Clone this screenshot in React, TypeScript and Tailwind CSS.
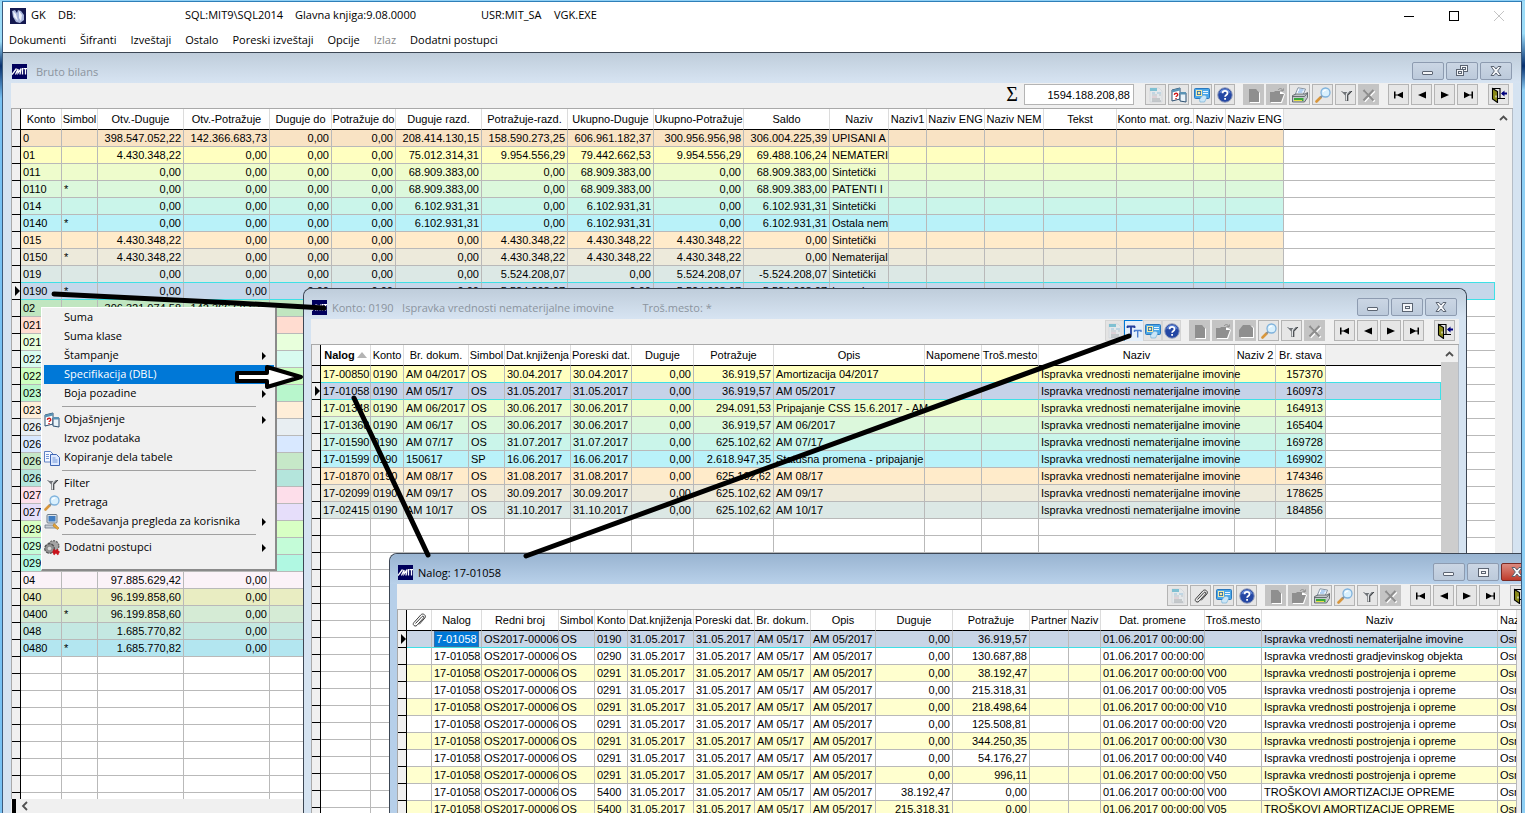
import type { ReactNode } from "react";
import clsx from "clsx";

type Col = { w?: number; label: ReactNode; align?: "right"; bold?: boolean; headLeft?: boolean; spill?: boolean };
type Row = { bg: string; cells: ReactNode[] };

/* ---------- icons ---------- */

const icons: Record<string, ReactNode> = {
  form: (
    <>
      <path d="M2 1h9l3 3v11H2z" fill="#e4e8ea" stroke="#ccd2d6" strokeWidth="0.6" />
      <path d="M2 1h7v3H2z" fill="#7fc0d2" />
      <path d="M4 6h3M9 6h4" stroke="#9cc3dc" />
      <path d="M4 8h5M11 8h2" stroke="#b9c2c8" />
      <path d="M4 10h5" stroke="#d9bac2" />
      <path d="M4 12h8M4 14h9" stroke="#a4a8ab" />
    </>
  ),
  explain: (
    <>
      <path d="M1 3l8-2v11l-8 2z" fill="#fff" stroke="#2c4f70" />
      <path d="M1 3l8-2v2.500L1 5.500z" fill="#5b93b5" />
      <path d="M9 6h6v9l-6-1z" fill="#eaf4fa" stroke="#2c4f70" />
      <path d="M9 5h6v2.500H9z" fill="#5b93b5" />
      <path d="M3.300 7.800c.3-2 3.700-2 3.400 0-.2 1.300-1.600 1.200-1.600 2.300M5 11v1.300" stroke="#d01818" strokeWidth="1.400" fill="none" />
    </>
  ),
  screen: (
    <>
      <rect x="0.500" y="1.500" width="15" height="10" rx="1" fill="#4ba7e8" stroke="#2b78bd" />
      <rect x="2.500" y="3.500" width="5" height="5" fill="#2f6fa8" stroke="#f3e9a6" />
      <circle cx="5" cy="6" r="1.300" fill="#f3e9a6" />
      <path d="M9 4.500h5M9 6.500h5" stroke="#e8f5ff" />
      <path d="M8 9c2-1.500 5-.5 4.500 2L10.500 15H6l-.5-2.500z" fill="#cbe6f7" stroke="#6aa9d2" strokeWidth="0.600" />
    </>
  ),
  help: (
    <>
      <circle cx="8" cy="8" r="7.300" fill="#2447a4" stroke="#9aa3bd" />
      <path d="M2.200 6.500a6 6 0 0 1 11.600 0c-3-2-8.600-2-11.600 0z" fill="#6488d6" />
      <path d="M5.600 6.200c0-3 4.900-3 4.900 0 0 1.800-2.400 1.700-2.400 3.600M8.100 11v1.800" stroke="#fff" strokeWidth="1.800" fill="none" />
    </>
  ),
  blank: (
    <>
      <path d="M4 3h7l3 3v10H4z" fill="#fff" />
      <path d="M3 2h7l3 3v10H3z" fill="#8f8f8f" />
    </>
  ),
  folder: (
    <>
      <path d="M2 6h4l1-1h6l3 2-3 9H2z" fill="#fff" />
      <path d="M1 5h4l1-1h5v3h4l-3 8H1z" fill="#8f8f8f" />
      <path d="M9 3c1.500-2 4-2 5 1M14 4l.5-2.500M14 4l-2.500-.5" stroke="#8f8f8f" fill="none" />
    </>
  ),
  cabinet: (
    <>
      <path d="M2 8l4-5h8l2 2v10H3z" fill="#fff" />
      <path d="M1 7l4-5h7l3 3v9H1z" fill="#8f8f8f" />
    </>
  ),
  printer: (
    <>
      <path d="M6 .800l7.500 1.200-2.500 6H3z" fill="#f6faff" stroke="#6f7f90" strokeWidth="0.800" />
      <path d="M7 3h4.500M6 5h4.500" stroke="#6fa5e3" />
      <path d="M.500 8.500L4 7h9l2.500-1.500v5L12.500 15H.500z" fill="#c3c8cc" stroke="#4f565c" strokeWidth="0.800" />
      <path d="M.500 9.500h12L15.500 6" fill="none" stroke="#4f565c" strokeWidth="0.800" />
      <path d="M2 11h9.500v3H2z" fill="#3aa83c" />
      <path d="M2 13.500h8" stroke="#e6e04a" />
    </>
  ),
  search: (
    <>
      <path d="M5.500 10.500L1.500 14.500" stroke="#d8963c" strokeWidth="2.600" strokeLinecap="round" />
      <path d="M7.500 8.500l-2 2" stroke="#8a8f95" strokeWidth="2" />
      <circle cx="10.500" cy="5.500" r="4.500" fill="#d9f0fd" stroke="#7fb2dc" strokeWidth="1.300" />
      <path d="M8.200 5c.5-1.500 2-2 3-1.800" stroke="#fff" strokeWidth="1.200" fill="none" />
    </>
  ),
  funnel: (
    <>
      <path d="M3 4h11l-4 4.500V14H7.200V8.500z" fill="#6f7377" />
      <path d="M4.500 4.500h6L8.500 7v6.500" stroke="#e4e6e8" fill="none" strokeWidth="1.200" />
      <path d="M14 4l-4.200 4.500V14" stroke="#3e4144" fill="none" />
    </>
  ),
  cross: (
    <>
      <path d="M3.500 4l10 10.500M13.500 4l-10 10.500" stroke="#fff" strokeWidth="2.200" />
      <path d="M2.500 3l10 10.500M12.500 3l-10 10.500" stroke="#8e8e8e" strokeWidth="2.200" />
    </>
  ),
  first: <path d="M3 4.500h1.500V7.500h2L12 4.800v6.400L6.500 8.500h-2v3H3z" fill="#000" />,
  prev: <path d="M12 4.500v7L4 8z" fill="#000" />,
  next: <path d="M4 4.500v7L12 8z" fill="#000" />,
  last: <path d="M13 4.500h-1.500V7.500h-2L4 4.800v6.400L9.500 8.500h2v3H13z" fill="#000" />,
  exit: (
    <>
      <path d="M1.500 1.500H9M9 1v10.500M7 11.500h7" fill="none" stroke="#000" strokeWidth="1.100" />
      <path d="M1.500 1.500l5 3v11l-5-3.500z" fill="#8a8a18" stroke="#000" strokeWidth="1.100" />
      <path d="M5 8.500v2" stroke="#fff" />
      <path d="M11 6.500h5" stroke="#00007c" strokeWidth="2" />
      <path d="M13.500 3.500v6l-3.500-3z" fill="#00007c" />
    </>
  ),
  clip: (
    <path
      d="M4.500 11.500l6.500-7c1-1 2.500.2 1.600 1.400L6 13.300c-1.800 2-5-.4-3.200-2.600L9.800 2.900c2.200-2.400 6 .6 4 3.200l-5.600 6.300"
      fill="none"
      stroke="#3c3c3c"
      strokeWidth="1"
    />
  ),
  letters: (
    <>
      <path d="M1 3.500h8M5 3.500v9M1.500 3v2M8.500 3v2" stroke="#233f9c" strokeWidth="1.800" />
      <path d="M8 7.500h7.500M11.700 7.500v7M8.500 7v2M15 7v2" stroke="#4d7fd0" strokeWidth="1.400" />
    </>
  ),
  copy: (
    <>
      <path d="M.5 1.500h6l2.500 2.500v8h-8.500z" fill="#f4f8ff" stroke="#5c80c4" />
      <path d="M6.500 4.500h6l3 3v8h-9z" fill="#dde9ff" stroke="#3f66b4" />
      <path d="M2 4.500h3M2 6.500h3M2 8.500h3M8.500 8h3M8.500 10h5M8.500 12h5" stroke="#7397d8" />
    </>
  ),
  computer: (
    <>
      <rect x="3" y="0.500" width="10" height="8.500" rx="1" fill="#dce3ea" stroke="#6c7a88" />
      <rect x="4.500" y="2" width="7" height="5.500" fill="#3f7cc0" />
      <path d="M1 11h11v3H1z" fill="#c6ccd2" stroke="#6c7a88" strokeWidth="0.800" />
      <path d="M10 9.500l5 4.500-1.500 1.500L9 12z" fill="#e6a63a" stroke="#b77818" strokeWidth="0.600" />
    </>
  ),
  gears: (
    <>
      <circle cx="9.500" cy="6" r="5.300" fill="#a4a4a4" stroke="#6b6b6b" strokeWidth="1.400" strokeDasharray="2 1" />
      <circle cx="5.500" cy="8.500" r="4.800" fill="#8f8f8f" stroke="#4e4e4e" strokeWidth="1.200" strokeDasharray="3 1" />
      <circle cx="5.500" cy="8.500" r="1.800" fill="#d8d8d8" />
      <path d="M9.500 9.500l5 5M14 9.500l-4.500 5M8.500 12h7" stroke="#c8141c" strokeWidth="1.900" />
    </>
  ),
};

const Icon = ({ name }: { name: string }) => (
  <svg viewBox="0 0 16 16" className="size-4 shrink-0" aria-hidden="true">
    {icons[name]}
  </svg>
);

const MitLogo = () => (
  <svg viewBox="0 0 15 15" className="size-[15px] shrink-0" aria-hidden="true">
    <path d="M0 0h15v15H0z" fill="#00005c" />
    <path d="M0 10.500l4.500-6M3.500 10.500L6 5v4L9 4.500M8 10.500l1-6M10.500 4v6.500M11.500 4.600H15M13.500 4.600v6" stroke="#fff" strokeWidth="1.300" fill="none" />
  </svg>
);

/* ---------- toolbar ---------- */

const DISABLED = ["blank", "folder", "cross", "cabinet"];

const ToolButton = ({ name, flat }: { name: string; flat?: boolean }) => (
  <button
    type="button"
    aria-label={name}
    disabled={DISABLED.includes(name)}
    className={clsx(
      "flex h-[21px] shrink-0 items-center justify-center border",
      flat ? "w-[19px]" : "w-[21px]",
      name === "letters"
        ? "border-transparent border-t-[#0078d7] border-l-[#0078d7] bg-[#e4effa]"
        : DISABLED.includes(name)
          ? "border-[#c4c4c4] bg-[#c4c4c4]"
          : flat
            ? "border-[#d4d4d4] bg-[#e4e4e4]"
            : "border-[#b4b4b4] bg-[#e6e6e6]",
    )}
  >
    <Icon name={name} />
  </button>
);

const Toolbar = ({ left, flat, edit, children }: { left: string[]; flat?: boolean; edit: string[]; children?: ReactNode }) => (
  <div className="flex h-[25px] shrink-0 items-start justify-end bg-[#f0f0f0] pt-px pr-1">
    {children}
    <div className={clsx("mr-2 flex", !flat && "gap-0.5")}>
      {left.map((n) => (
        <ToolButton key={n} name={n} flat={flat} />
      ))}
    </div>
    <div className="mr-[9px] flex gap-0.5">
      {edit.map((n) => (
        <ToolButton key={n} name={n} />
      ))}
    </div>
    <div className="mr-2.5 flex gap-0.5">
      {["first", "prev", "next", "last"].map((n) => (
        <ToolButton key={n} name={n} />
      ))}
    </div>
    <ToolButton name="exit" />
  </div>
);

/* ---------- data grid ---------- */

const Grid = ({ cols, rows, selected, filler, thumb }: { cols: Col[]; rows: Row[]; selected: number; filler?: boolean; thumb?: boolean }) => {
  const blanks: Row[] = Array.from({ length: 44 - rows.length }, () => ({ bg: "#ffffff", cells: [] }));
  return (
    <div className="flex min-h-0 flex-1 overflow-hidden border-t border-l border-[#a9a9a9] bg-white">
      <div className="min-w-0 flex-1 overflow-hidden">
        <table className="w-full table-fixed border-separate border-spacing-0 font-['Liberation_Sans',Arial,sans-serif] text-[11px] leading-4 text-black">
          <colgroup>
            <col className="w-[9px]" />
            {cols.map((c, i) => (
              <col key={i} style={c.w ? { width: c.w } : undefined} />
            ))}
            {filler && <col />}
          </colgroup>
          <thead>
            <tr className="h-[21px]">
              <th className="border-r border-b border-black bg-[#f0f0f0] p-0" />
              {cols.map((c, i) => (
                <th
                  key={i}
                  className={clsx(
                    "border-r border-b border-r-[#dcdcdc] border-b-black p-0 whitespace-nowrap",
                    c.bold ? "font-bold" : "font-normal",
                    c.headLeft ? "pl-0.5 text-left" : "text-center",
                  )}
                >
                  {c.label}
                </th>
              ))}
              {filler && <th className="border-b border-black bg-[#f0f0f0] p-0" />}
            </tr>
          </thead>
          <tbody>
            {[...rows, ...blanks].map((row, r) => {
              const line = r === selected || r === selected - 1 ? "border-b-[#3fe0e6]" : "border-b-[#b9b9b9]";
              return (
                <tr key={r} className="h-[17px]">
                  <td className="border-r border-b border-black bg-[#f0f0f0] p-0">
                    {r === selected && (
                      <svg viewBox="0 0 8 10" className="ml-auto h-2.5 w-[5px]" preserveAspectRatio="none" aria-hidden="true">
                        <path d="M0 0v10l8-5z" />
                      </svg>
                    )}
                  </td>
                  {cols.map((c, i) => (
                    <td
                      key={i}
                      style={{ backgroundColor: row.bg }}
                      className={clsx(
                        "border-r border-b border-r-[#b9b9b9] p-0 px-0.5 whitespace-nowrap",
                        !c.spill && "overflow-hidden",
                        line,
                        c.align === "right" && "text-right",
                      )}
                    >
                      {row.cells[i]}
                    </td>
                  ))}
                  {filler && (
                    <td
                      style={{ backgroundColor: r === selected ? row.bg : "#ffffff" }}
                      className={clsx("border-b p-0", line, r === selected && "border-r border-r-[#3fe0e6]")}
                    />
                  )}
                </tr>
              );
            })}
          </tbody>
        </table>
      </div>
      <div className="flex w-[18px] shrink-0 flex-col items-center border-r border-[#b4bcc6] bg-[#f0f0f0]">
        <svg viewBox="0 0 17 17" className="size-[17px] shrink-0" aria-hidden="true">
          <path d="M5 11l3.500-3.500L12 11" fill="none" stroke="#505050" strokeWidth="1.800" />
        </svg>
        {thumb && <div className="w-full flex-1 bg-[#cdcdcd]" />}
      </div>
    </div>
  );
};

/* ---------- MDI window ---------- */

const CaptionButton = ({ kind, danger }: { kind: "min" | "restore" | "max" | "close"; danger?: boolean }) => (
  <button
    type="button"
    aria-label={kind}
    className={clsx(
      "flex h-[18px] w-8 shrink-0 items-center justify-center rounded-xs border",
      danger ? "border-[#7a2a24] bg-linear-to-b from-[#dc8a80] to-[#bf3a2b]" : "border-[#8d9bb0] bg-linear-to-b from-[#cbd6e4] to-[#bccadb]",
    )}
  >
    <svg viewBox="0 0 14 12" className="h-3 w-3.5" fill="#f4f6f9" stroke="#5b6472" aria-hidden="true">
      {kind === "min" && <rect x="1.500" y="6.500" width="10" height="3" rx="0.500" />}
      {kind === "max" && (
        <>
          <rect x="2.500" y="2.500" width="10" height="8" />
          <rect x="5.500" y="5.500" width="4" height="2" />
        </>
      )}
      {kind === "restore" && (
        <>
          <rect x="5.500" y="0.500" width="7" height="6" />
          <rect x="7.500" y="2.500" width="3" height="2" />
          <rect x="1.500" y="4.500" width="7" height="6" />
          <rect x="3.500" y="6.500" width="3" height="2" />
        </>
      )}
      {kind === "close" && <path d="M2 1.500h3L7 4l2-2.500h3L8.700 6l3.300 4.500H9L7 8l-2 2.500H2L5.300 6z" />}
    </svg>
  </button>
);

const Win = ({
  title,
  active,
  maximized,
  className,
  children,
}: {
  title: ReactNode;
  active?: boolean;
  maximized?: boolean;
  className?: string;
  children: ReactNode;
}) => (
  <section
    className={clsx(
      "flex min-h-0 flex-col border-[#3c4654]",
      maximized ? "border-t" : "rounded-t-lg border border-b-0",
      active ? "bg-[#b6cfe9]" : "bg-[#d5e3f1]",
      className,
    )}
  >
    <header
      className={clsx(
        "flex h-[30px] shrink-0 items-start bg-linear-to-b pr-[9px]",
        maximized ? "gap-[9px] pl-[9px]" : "gap-[5px] rounded-t-lg pl-2",
        active ? "from-[#99b4d1] to-[#b9d1ea]" : "from-[#bfcddb] to-[#d7e4f2]",
      )}
    >
      <div className="flex h-9 items-center">
        <MitLogo />
      </div>
      <h2 className={clsx("flex h-[38px] min-w-0 flex-1 items-center text-[11px] whitespace-pre", active ? "text-black" : "text-[#8b949e]")}>{title}</h2>
      <div className="flex gap-0.5 pt-[9px]">
        <CaptionButton kind="min" />
        <CaptionButton kind={maximized ? "restore" : "max"} />
        <CaptionButton kind="close" danger={active} />
      </div>
    </header>
    <div className={clsx("flex min-h-0 flex-1 flex-col bg-[#f0f0f0]", maximized ? "mx-2" : "mx-[7px]")}>{children}</div>
  </section>
);

/* ---------- data ---------- */

const mainCols: Col[] = [
  { w: 41, label: "Konto" },
  { w: 36, label: "Simbol" },
  { w: 86, label: "Otv.-Duguje", align: "right" },
  { w: 86, label: "Otv.-Potražuje", align: "right" },
  { w: 62, label: "Duguje do", align: "right" },
  { w: 64, label: "Potražuje do", align: "right" },
  { w: 86, label: "Duguje razd.", align: "right" },
  { w: 86, label: "Potražuje-razd.", align: "right" },
  { w: 86, label: "Ukupno-Duguje", align: "right" },
  { w: 90, label: "Ukupno-Potražuje", align: "right" },
  { w: 86, label: "Saldo", align: "right" },
  { w: 59, label: "Naziv" },
  { w: 38, label: "Naziv1" },
  { w: 58, label: "Naziv ENG" },
  { w: 59, label: "Naziv NEM" },
  { w: 73, label: "Tekst" },
  { w: 77, label: "Konto mat. org." },
  { w: 32, label: "Naziv" },
  { w: 58, label: "Naziv ENG" },
];

const Z = "0,00";
const mainRows: Row[] = [
  { bg: "#f9e3c4", cells: ["0", "", "398.547.052,22", "142.366.683,73", Z, Z, "208.414.130,15", "158.590.273,25", "606.961.182,37", "300.956.956,98", "306.004.225,39", "UPISANI A"] },
  { bg: "#ffffc0", cells: ["01", "", "4.430.348,22", Z, Z, Z, "75.012.314,31", "9.954.556,29", "79.442.662,53", "9.954.556,29", "69.488.106,24", "NEMATERI"] },
  { bg: "#eefccc", cells: ["011", "", Z, Z, Z, Z, "68.909.383,00", Z, "68.909.383,00", Z, "68.909.383,00", "Sintetički"] },
  { bg: "#dcf8dc", cells: ["0110", "*", Z, Z, Z, Z, "68.909.383,00", Z, "68.909.383,00", Z, "68.909.383,00", "PATENTI I"] },
  { bg: "#caf5ea", cells: ["014", "", Z, Z, Z, Z, "6.102.931,31", Z, "6.102.931,31", Z, "6.102.931,31", "Sintetički"] },
  { bg: "#b9f2f9", cells: ["0140", "*", Z, Z, Z, Z, "6.102.931,31", Z, "6.102.931,31", Z, "6.102.931,31", "Ostala nema"] },
  { bg: "#ffebca", cells: ["015", "", "4.430.348,22", Z, Z, Z, Z, "4.430.348,22", "4.430.348,22", "4.430.348,22", Z, "Sintetički"] },
  { bg: "#edeadb", cells: ["0150", "*", "4.430.348,22", Z, Z, Z, Z, "4.430.348,22", "4.430.348,22", "4.430.348,22", Z, "Nematerijaln"] },
  { bg: "#dce8e5", cells: ["019", "", Z, Z, Z, Z, Z, "5.524.208,07", Z, "5.524.208,07", "-5.524.208,07", "Sintetički"] },
  { bg: "#c6d7ea", cells: ["0190", "*", Z, Z, Z, Z, Z, "5.524.208,07", Z, "5.524.208,07", "-5.524.208,07", "Ispravka"] },
  { bg: "#c0e6c0", cells: ["02", "", "306.321.074,58", "142.366.683,73"] },
  { bg: "#ffdcd0", cells: ["021"] },
  { bg: "#e8ffdc", cells: ["0210"] },
  { bg: "#d8fbf0", cells: ["022"] },
  { bg: "#ccffc0", cells: ["0220"] },
  { bg: "#b8f6cc", cells: ["023"] },
  { bg: "#ffeed8", cells: ["0230"] },
  { bg: "#e8eef2", cells: ["026"] },
  { bg: "#d8e8ff", cells: ["0260"] },
  { bg: "#c6e8c8", cells: ["0261"] },
  { bg: "#b4e5dc", cells: ["0269"] },
  { bg: "#fddeea", cells: ["027"] },
  { bg: "#e6defa", cells: ["0270"] },
  { bg: "#d8ffc4", cells: ["029"] },
  { bg: "#c4fcd8", cells: ["0290"] },
  { bg: "#b0f8e2", cells: ["0291"] },
  { bg: "#fbf2f8", cells: ["04", "", "97.885.629,42", Z] },
  { bg: "#e9edc2", cells: ["040", "", "96.199.858,60", Z] },
  { bg: "#d5ebd5", cells: ["0400", "*", "96.199.858,60", Z] },
  { bg: "#c4e8e2", cells: ["048", "", "1.685.770,82", Z] },
  { bg: "#b3e6f0", cells: ["0480", "*", "1.685.770,82", Z] },
];

const specCols: Col[] = [
  {
    w: 50,
    bold: true,
    label: (
      <span className="flex items-center justify-center gap-0.5">
        Nalog
        <svg viewBox="0 0 10 6" className="h-1.5 w-2.5" aria-hidden="true">
          <path d="M0 6h10L5 0z" fill="#b4b4b4" />
        </svg>
      </span>
    ),
  },
  { w: 33, label: "Konto" },
  { w: 65, label: "Br. dokum." },
  { w: 36, label: "Simbol" },
  { w: 66, label: "Dat.knjiženja" },
  { w: 61, label: "Poreski dat." },
  { w: 62, label: "Duguje", align: "right" },
  { w: 80, label: "Potražuje", align: "right" },
  { w: 151, label: "Opis", spill: true },
  { w: 57, label: "Napomene" },
  { w: 57, label: "Troš.mesto" },
  { w: 196, label: "Naziv", spill: true },
  { w: 41, label: "Naziv 2" },
  { w: 50, label: "Br. stava", align: "right" },
];

const ISPRAVKA = "Ispravka vrednosti nematerijalne imovine";
const specRows: Row[] = [
  ["#ffffc0", "17-00850", "AM 04/2017", "OS", "30.04.2017", "36.919,57", "Amortizacija 04/2017", "157370"],
  ["#c6d2e8", "17-01058", "AM 05/17", "OS", "31.05.2017", "36.919,57", "AM 05/2017", "160973"],
  ["#eefccc", "17-01348", "AM 06/2017", "OS", "30.06.2017", "294.091,53", "Pripajanje CSS 15.6.2017 - AM", "164913"],
  ["#dcf8dc", "17-01368", "AM 06/17", "OS", "30.06.2017", "36.919,57", "AM 06/2017", "165404"],
  ["#caf5ea", "17-01590", "AM 07/17", "OS", "31.07.2017", "625.102,62", "AM 07/17", "169728"],
  ["#b9f2f9", "17-01599", "150617", "SP", "16.06.2017", "2.618.947,35", "Statusna promena - pripajanje", "169902"],
  ["#ffebca", "17-01870", "AM 08/17", "OS", "31.08.2017", "625.102,62", "AM 08/17", "174346"],
  ["#edeadb", "17-02099", "AM 09/17", "OS", "30.09.2017", "625.102,62", "AM 09/17", "178625"],
  ["#dce8e5", "17-02415", "AM 10/17", "OS", "31.10.2017", "625.102,62", "AM 10/17", "184856"],
].map(([bg, nalog, doc, sim, date, amount, desc, no]) => ({
  bg,
  cells: [nalog, "0190", doc, sim, date, date, Z, amount, desc, "", "", ISPRAVKA, "", no],
}));

const nalogCols: Col[] = [
  {
    w: 25,
    label: (
      <span className="flex justify-center">
        <Icon name="clip" />
      </span>
    ),
  },
  { w: 50, label: "Nalog" },
  { w: 77, label: "Redni broj", spill: true },
  { w: 36, label: "Simbol" },
  { w: 33, label: "Konto" },
  { w: 66, label: "Dat.knjiženja" },
  { w: 61, label: "Poreski dat." },
  { w: 56, label: "Br. dokum." },
  { w: 65, label: "Opis" },
  { w: 77, label: "Duguje", align: "right" },
  { w: 77, label: "Potražuje", align: "right" },
  { w: 39, label: "Partner" },
  { w: 32, label: "Naziv" },
  { w: 104, label: "Dat. promene", spill: true },
  { w: 57, label: "Troš.mesto" },
  { w: 236, label: "Naziv" },
  { label: "Naziv 2", headLeft: true },
];

const OPREMA = "Ispravka vrednosti postrojenja i opreme";
const TROSKOVI = "TROŠKOVI AMORTIZACIJE OPREME";
const nalogRows: Row[] = [
  ["0190", Z, "36.919,57", "", ISPRAVKA],
  ["0290", Z, "130.687,88", "", "Ispravka vrednosti gradjevinskog objekta"],
  ["0291", Z, "38.192,47", "V00", OPREMA],
  ["0291", Z, "215.318,31", "V05", OPREMA],
  ["0291", Z, "218.498,64", "V10", OPREMA],
  ["0291", Z, "125.508,81", "V20", OPREMA],
  ["0291", Z, "344.250,35", "V30", OPREMA],
  ["0291", Z, "54.176,27", "V40", OPREMA],
  ["0291", Z, "996,11", "V50", OPREMA],
  ["5400", "38.192,47", Z, "V00", TROSKOVI],
  ["5400", "215.318,31", Z, "V05", TROSKOVI],
].map(([konto, duguje, potrazuje, mesto, naziv], i) => ({
  bg: i === 0 ? "#c8d5e6" : i % 2 ? "#ffffff" : "#ffffcf",
  cells: [
    "",
    i === 0 ? (
      <input
        aria-label="Nalog"
        defaultValue="7-01058"
        className="block h-4 w-full border border-[#3a6ea5] bg-[#0078d7] text-center leading-3 text-white"
      />
    ) : (
      "17-01058"
    ),
    "OS2017-00006",
    "OS",
    konto,
    "31.05.2017",
    "31.05.2017",
    "AM 05/17",
    "AM 05/2017",
    duguje,
    potrazuje,
    "",
    "",
    "01.06.2017 00:00:00",
    mesto,
    naziv,
    "Osn",
  ],
}));

const contextMenu = [
  [{ label: "Suma" }, { label: "Suma klase" }, { label: "Štampanje", sub: true }, { label: "Specifikacija (DBL)", active: true }, { label: "Boja pozadine", sub: true }],
  [{ label: "Objašnjenje", icon: "explain", sub: true }, { label: "Izvoz podataka" }, { label: "Kopiranje dela tabele", icon: "copy" }],
  [{ label: "Filter", icon: "funnel" }, { label: "Pretraga", icon: "search" }, { label: "Podešavanja pregleda za korisnika", icon: "computer", sub: true }],
  [{ label: "Dodatni postupci", icon: "gears", sub: true }],
] as { label: string; icon?: string; sub?: boolean; active?: boolean }[][];

const ContextMenu = () => (
  <div
    role="menu"
    className="absolute top-[305px] left-[38px] w-[236px] border-r-2 border-b-2 border-l border-t border-t-white border-r-[#8a8a8a] border-b-[#8a8a8a] border-l-white bg-[#f0f0f0] pr-px pb-3 pl-0.5 text-[11px] text-black"
  >
    {contextMenu.map((group, g) => (
      <div key={g}>
        {g > 0 && <div className="mx-[18px] h-[7px] pt-[3px] after:block after:h-px after:bg-[#a0a0a0]" />}
        {group.map((item) => (
          <button
            key={item.label}
            type="button"
            role="menuitem"
            className={clsx("flex h-[19px] w-full items-center gap-1 text-left whitespace-nowrap", item.active && "bg-[#0078d7] text-white")}
          >
            <span className="size-4 shrink-0">{item.icon && <Icon name={item.icon} />}</span>
            <span className="flex-1">{item.label}</span>
            {item.sub && (
              <svg viewBox="0 0 4 8" className="mr-2 h-2 w-1" aria-hidden="true">
                <path d="M0 0v8l4-4z" />
              </svg>
            )}
          </button>
        ))}
      </div>
    ))}
  </div>
);

const menuItems = ["Dokumenti", "Šifranti", "Izveštaji", "Ostalo", "Poreski izveštaji", "Opcije", "Izlaz", "Dodatni postupci"];

export default function App() {
  return (
    <div className="relative flex h-screen w-full overflow-hidden bg-[#8fd0f5] pt-px font-['Open_Sans','Noto_Sans',sans-serif]">
      <div className="w-0.5 shrink-0 bg-linear-to-b from-[#9cdcf8] from-5% via-[#08306e] via-8% to-[#78c2f4] to-12%" />

      <main className="relative flex min-w-0 flex-1 flex-col overflow-hidden border-t border-r border-l border-t-[#2f7fb8] border-r-[#3c5a7c] border-l-[#3c5a7c] bg-white">
        <header className="flex h-[27px] shrink-0 items-center pr-3.5 pl-[7px] text-[11px] text-black">
          <svg viewBox="0 0 16 16" className="mr-[5px] size-4 shrink-0" aria-hidden="true">
            <path d="M0 0h16v16H0z" fill="#14184f" />
            <path d="M2 3l3-1 2 3 1-3 3 1 3 4v5l-4 3-4-1-3-5z" fill="#a9b6dc" />
            <path d="M3 3l3 3 2 7-4-4zM9 3l3 4-1 6-2-3z" fill="#eef2fc" />
          </svg>
          <h1 className="flex whitespace-nowrap">
            <span className="w-[27px]">GK</span>
            <span className="w-[127px]">DB:</span>
            <span className="w-[110px]">SQL:MIT9\SQL2014</span>
            <span className="w-[186px]">Glavna knjiga:9.08.0000</span>
            <span className="w-[73px]">USR:MIT_SA</span>
            <span>VGK.EXE</span>
          </h1>
          <div className="ml-auto flex gap-[29px]">
            <button type="button" aria-label="Minimize">
              <svg viewBox="0 0 16 16" className="size-4" stroke="#000">
                <path d="M3 8.500h10" />
              </svg>
            </button>
            <button type="button" aria-label="Maximize">
              <svg viewBox="0 0 16 16" className="size-4" fill="none" stroke="#000">
                <rect x="3.500" y="3.500" width="9" height="9" />
              </svg>
            </button>
            <button type="button" aria-label="Close" disabled>
              <svg viewBox="0 0 16 16" className="size-4" stroke="#c4c4c4">
                <path d="M3 3l10 10M13 3L3 13" />
              </svg>
            </button>
          </div>
        </header>

        <nav className="flex h-[23px] shrink-0 items-center gap-3.5 pl-1.5 text-[11px] text-black">
          {menuItems.map((m) => (
            <button key={m} type="button" disabled={m === "Izlaz"} className="disabled:text-[#8a8a8a]">
              {m}
            </button>
          ))}
        </nav>

        <Win title="Bruto bilans" maximized className="flex-1">
          <Toolbar left={["form", "explain", "screen", "help"]} edit={["blank", "folder", "printer", "search", "funnel", "cross"]}>
            <label htmlFor="sum" className="mr-1.5 font-['Liberation_Serif',serif] text-[20px] leading-5 text-black">
              Σ
            </label>
            <input
              id="sum"
              defaultValue="1594.188.208,88"
              className="mr-[11px] h-[21px] w-[110px] border border-[#b4b4b4] bg-white px-[3px] text-right font-['Liberation_Sans',Arial,sans-serif] text-[11px] text-black"
            />
          </Toolbar>
          <Grid cols={mainCols} rows={mainRows} selected={9} filler />
          <div className="flex h-3.5 shrink-0 items-center bg-[#f0f0f0] pl-px">
            <div className="h-full w-1 bg-black" />
            <svg viewBox="0 0 8 10" className="ml-[5px] h-2.5 w-2" aria-hidden="true">
              <path d="M6 1L2 5l4 4" fill="none" stroke="#505050" strokeWidth="1.800" />
            </svg>
          </div>
        </Win>

        <Win title="Konto: 0190   Ispravka vrednosti nematerijalne imovine          Troš.mesto: *" className="absolute top-[286px] right-[54px] bottom-0 left-[300px]">
          <Toolbar left={["form", "letters", "screen", "help"]} flat edit={["blank", "folder", "cabinet", "search", "funnel", "cross"]} />
          <Grid cols={specCols} rows={specRows} selected={1} filler thumb />
        </Win>

        <Win title="Nalog: 17-01058" active className="absolute top-[551px] right-[-22px] bottom-0 left-[386px]">
          <Toolbar left={["form", "clip", "screen", "help"]} edit={["blank", "folder", "printer", "search", "funnel", "cross"]} />
          <Grid cols={nalogCols} rows={nalogRows} selected={0} />
        </Win>

        <ContextMenu />
      </main>

      <div className="w-[3px] shrink-0 bg-linear-to-b from-[#9cdcf8] from-4% via-[#08306e] via-8% to-[#8fd0f5] to-11%" />

      {/* Hand-drawn pointers between the windows */}
      <svg className="pointer-events-none absolute top-0 left-0 h-[813px] w-[1525px]" viewBox="0 0 1525 813" fill="none" stroke="#000" aria-hidden="true">
        <path d="M54 294L235 303L324 308M354 398L428 555M526 556L1129 336" strokeWidth="5" strokeLinecap="round" />
        <path d="M237 373h30v-6l34 10-34 10v-6h-30z" fill="#fff" strokeWidth="4" strokeLinejoin="round" />
      </svg>
    </div>
  );
}
